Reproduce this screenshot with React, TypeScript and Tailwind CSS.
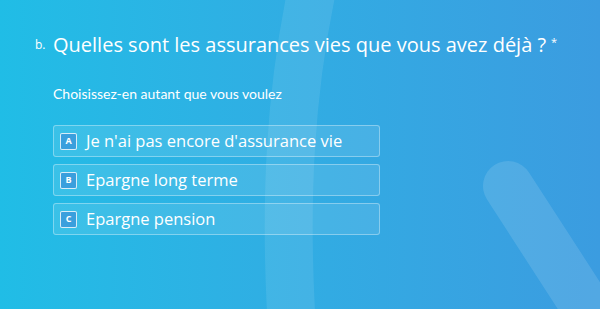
const options = [
  { key: 'A', label: "Je n'ai pas encore d'assurance vie" },
  { key: 'B', label: 'Epargne long terme' },
  { key: 'C', label: 'Epargne pension' },
];

function Decor() {
  return (
    <svg className="pointer-events-none absolute inset-0 h-full w-full" viewBox="0 0 600 309" preserveAspectRatio="none">
      <path d="M314 -20 C 290 90, 284 200, 292 330" fill="none" stroke="white" strokeOpacity="0.09" strokeWidth="48" />
      <path d="M508 186 L 640 390" fill="none" stroke="white" strokeOpacity="0.12" strokeWidth="50" strokeLinecap="round" />
    </svg>
  );
}

export default function App() {
  return (
    <div
      className="relative h-[309px] w-[600px] overflow-hidden bg-gradient-to-r from-[#20bde6] to-[#3b9ce0] text-white"
      style={{ fontFamily: '"Open Sans", Lato, sans-serif' }}
    >
      <Decor />
      <div className="relative pl-[35px] pt-[33px]">
        <div className="flex items-start">
          <span className="mt-[6px] w-[18px] text-[12px] leading-none">b.</span>
          <h1 className="text-[20px] leading-[24px]">
            Quelles sont les assurances vies que vous avez déjà ?
            <span className="relative -top-[6px] ml-[5px] text-[11px]">*</span>
          </h1>
        </div>
        <p className="ml-[18px] mt-[26px] text-[14px] leading-[16px]" style={{ fontFamily: 'Lato, sans-serif' }}>
          Choisissez-en autant que vous voulez
        </p>
        <ul className="ml-[18px] mt-[23px] flex w-[327px] flex-col gap-[7px]">
          {options.map((o) => (
            <li
              key={o.key}
              className="flex h-[32px] items-center gap-[9px] rounded-[3px] border border-white/35 bg-white/10 px-[6px]"
            >
              <span className="flex h-[17px] w-[17px] items-center justify-center rounded-[2px] border border-white/80 bg-[#3a9fdd] text-[9px] font-bold">
                {o.key}
              </span>
              <span className="text-[16.5px] leading-none">{o.label}</span>
            </li>
          ))}
        </ul>
      </div>
    </div>
  );
}
